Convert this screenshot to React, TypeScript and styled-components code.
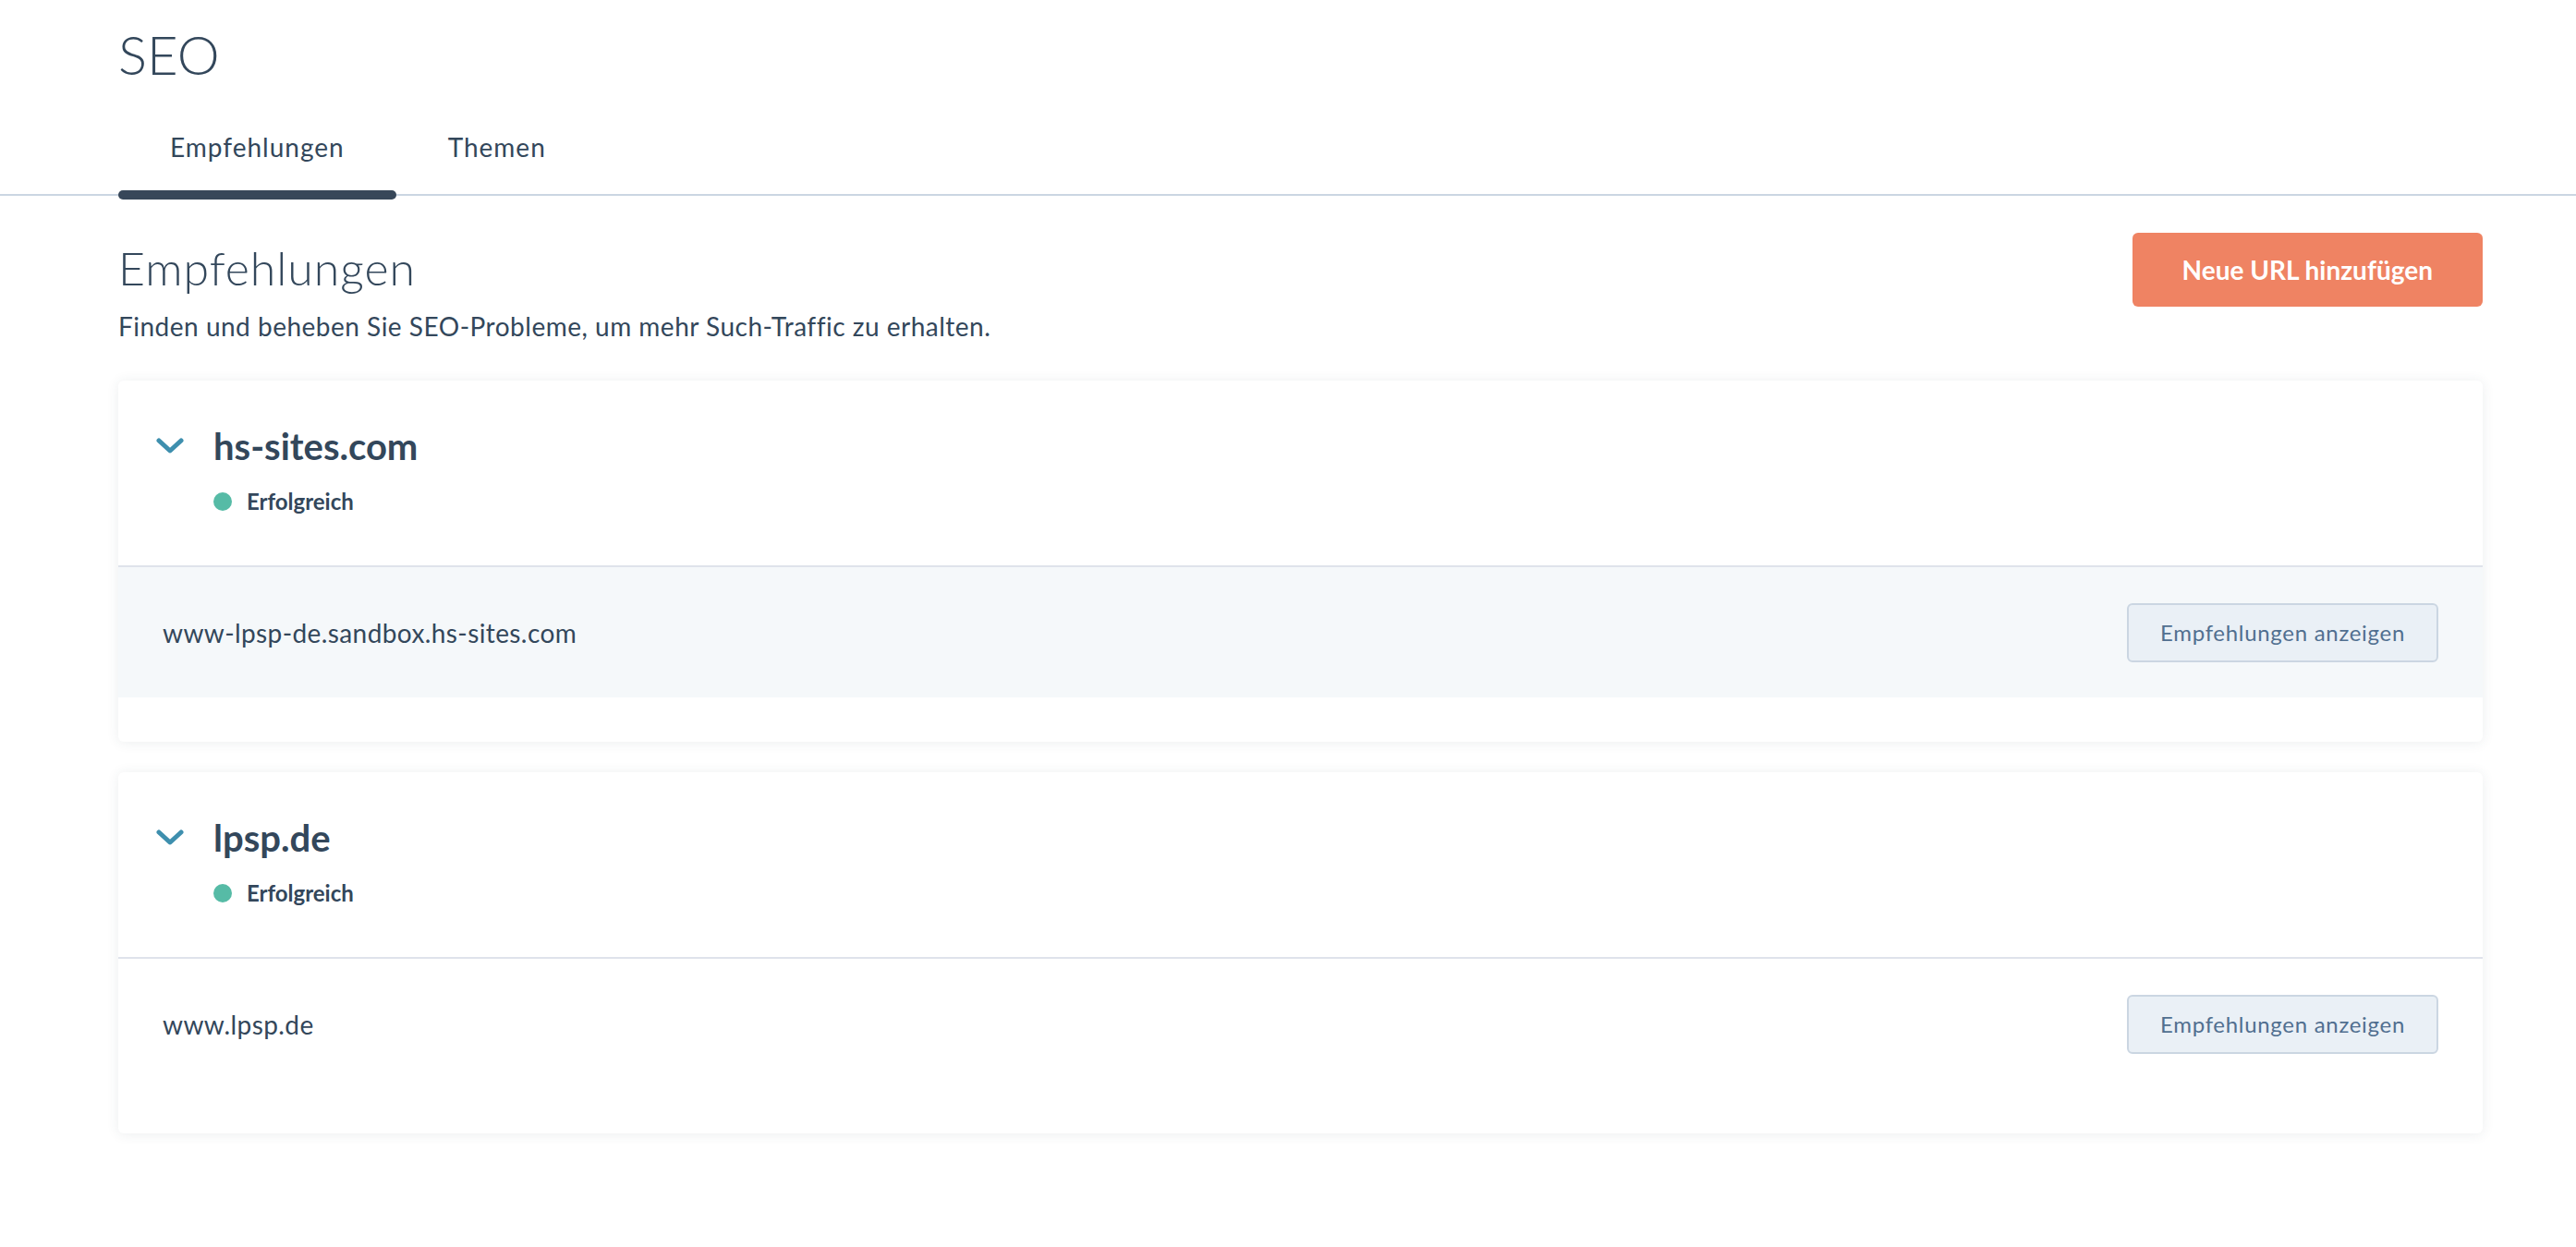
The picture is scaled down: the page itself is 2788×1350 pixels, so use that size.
import React from "react";
import styled, {createGlobalStyle} from "styled-components";

const GlobalStyle = createGlobalStyle`
  html, body {
    margin: 0;
    padding: 0;
    background: #ffffff;
  }
  body {
    font-family: Lato, "Open Sans", sans-serif;
    color: #33475b;
  }
  * {
    box-sizing: border-box;
  }
`;

type Domain = {
    name: string;
    status: string;
    url: string;
    shaded: boolean;
};

const domains: Domain[] = [
    {name: "hs-sites.com", status: "Erfolgreich", url: "www-lpsp-de.sandbox.hs-sites.com", shaded: true},
    {name: "lpsp.de", status: "Erfolgreich", url: "www.lpsp.de", shaded: false},
];

const Page = styled.div`
  min-height: 1350px;
  padding-top: 24px;
`;

const PageTitle = styled.h1`
  margin: 0;
  padding-left: 128px;
  font-size: 58px;
  line-height: 70px;
  font-weight: 300;
  color: #33475b;
`;

const TabBar = styled.nav`
  margin-top: 45px;
  display: flex;
  padding-left: 128px;
  border-bottom: 2px solid #cbd6e2;
`;

const Tab = styled.div<{ $active?: boolean }>`
  position: relative;
  padding: 0 56px 31px;
  font-size: 28px;
  line-height: 40px;
  letter-spacing: 1px;
  color: #33475b;
  cursor: pointer;

  &::after {
    content: "";
    display: ${(p) => (p.$active ? "block" : "none")};
    position: absolute;
    left: 0;
    right: 0;
    bottom: -6px;
    height: 10px;
    border-radius: 5px;
    background: #374759;
  }
`;

const Content = styled.main`
  padding: 40px 101px 0 128px;
`;

const HeaderRow = styled.div`
  display: flex;
  justify-content: space-between;
  align-items: flex-start;
`;

const HeaderText = styled.div`
  padding-top: 8px;
`;

const SectionTitle = styled.h2`
  margin: 0;
  font-size: 50px;
  line-height: 60px;
  font-weight: 300;
  letter-spacing: 1px;
  color: #33475b;
`;

const Subtitle = styled.p`
  margin: 13px 0 0;
  font-size: 28px;
  line-height: 40px;
  letter-spacing: 0.5px;
  color: #33475b;
`;

const PrimaryButton = styled.button`
  height: 80px;
  padding: 0 54px;
  border: none;
  border-radius: 6px;
  background: #ef8363;
  color: #ffffff;
  font-family: Lato, sans-serif;
  font-size: 28px;
  font-weight: 700;
  cursor: pointer;
`;

const CardList = styled.div`
  margin-top: 39px;
  display: flex;
  flex-direction: column;
  gap: 33px;
`;

const Card = styled.section`
  background: #ffffff;
  border-radius: 6px;
  box-shadow: 0 1px 14px rgba(45, 62, 80, 0.09);
  padding-bottom: 48px;
`;

const CardHeader = styled.div`
  padding: 46px 41px 53px;
  border-bottom: 2px solid #dfe3eb;
`;

const TitleRow = styled.div`
  display: flex;
  align-items: center;
  gap: 32px;
`;

const DomainName = styled.h4`
  margin: 0;
  font-size: 40px;
  line-height: 50px;
  font-weight: 700;
  color: #33475b;
`;

const StatusRow = styled.div`
  margin: 19px 0 0 62px;
  display: flex;
  align-items: center;
  gap: 16px;
  font-size: 24px;
  line-height: 32px;
  font-weight: 700;
  color: #33475b;
`;

const Dot = styled.span`
  width: 20px;
  height: 20px;
  border-radius: 50%;
  background: #56bba6;
`;

const UrlRow = styled.div<{ $shaded: boolean }>`
  height: 141px;
  padding: 0 48px;
  display: flex;
  align-items: center;
  justify-content: space-between;
  background: ${(p) => (p.$shaded ? "#f5f8fa" : "#ffffff")};
`;

const UrlText = styled.span`
  font-size: 28px;
  letter-spacing: 0.4px;
  color: #33475b;
`;

const SecondaryButton = styled.button`
  height: 64px;
  padding: 0 34px;
  border: 2px solid #cbd6e2;
  border-radius: 6px;
  background: #eaf0f6;
  color: #516f90;
  font-family: Lato, sans-serif;
  font-size: 24px;
  letter-spacing: 0.7px;
  cursor: pointer;
`;

const Chevron = () => (
    <svg width="30" height="18" viewBox="0 0 30 18">
        <polyline
            points="3,3 15,14 27,3"
            fill="none"
            stroke="#3e8fae"
            strokeWidth="5"
            strokeLinecap="round"
            strokeLinejoin="round"
        />
    </svg>
);

const DomainCard = ({domain}: { domain: Domain }) => (
    <Card>
        <CardHeader>
            <TitleRow>
                <Chevron/>
                <DomainName>{domain.name}</DomainName>
            </TitleRow>
            <StatusRow>
                <Dot/>
                {domain.status}
            </StatusRow>
        </CardHeader>
        <UrlRow $shaded={domain.shaded}>
            <UrlText>{domain.url}</UrlText>
            <SecondaryButton>Empfehlungen anzeigen</SecondaryButton>
        </UrlRow>
    </Card>
);

export default function App() {
    return (
        <React.Fragment>
            <GlobalStyle/>
            <Page>
                <PageTitle>SEO</PageTitle>
                <TabBar>
                    <Tab $active>Empfehlungen</Tab>
                    <Tab>Themen</Tab>
                </TabBar>
                <Content>
                    <HeaderRow>
                        <HeaderText>
                            <SectionTitle>Empfehlungen</SectionTitle>
                            <Subtitle>Finden und beheben Sie SEO-Probleme, um mehr Such-Traffic zu erhalten.</Subtitle>
                        </HeaderText>
                        <PrimaryButton>Neue URL hinzufügen</PrimaryButton>
                    </HeaderRow>
                    <CardList>
                        {domains.map((d) => (
                            <DomainCard key={d.name} domain={d}/>
                        ))}
                    </CardList>
                </Content>
            </Page>
        </React.Fragment>
    );
}
